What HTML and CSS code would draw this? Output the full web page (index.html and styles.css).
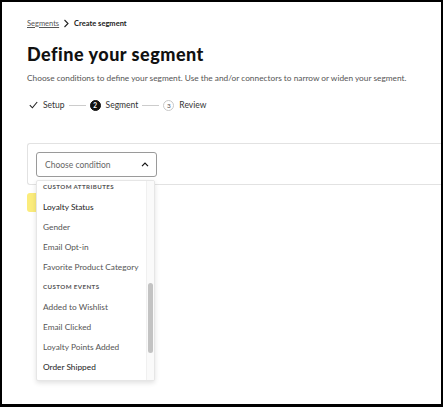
FILE: index.html
```html
<!DOCTYPE html>
<html lang="en">
<head>
  <meta charset="UTF-8" />
  <title>Create segment</title>
  <link rel="stylesheet" href="styles.css">
</head>
<body>
  <div class="page">
    <div class="breadcrumb">
      <a href="#">Segments</a>
      <svg class="crumb-sep" width="7" height="9" viewBox="0 0 7 9"><path d="M1.5 1l3.5 3.5L1.5 8" fill="none" stroke="#222" stroke-width="1.1"/></svg>
      <span class="current">Create segment</span>
    </div>

    <h1>Define your segment</h1>
    <p class="subtitle">Choose conditions to define your segment. Use the and/or connectors to narrow or widen your segment.</p>

    <div class="steps">
      <div class="step done">
        <svg width="9" height="8" viewBox="0 0 9 8"><path d="M0.8 4.2l2.6 2.6L8.2 1" fill="none" stroke="#222" stroke-width="1.1"/></svg>
        <span>Setup</span>
      </div>
      <div class="step-line"></div>
      <div class="step active">
        <span class="num">2</span>
        <span>Segment</span>
      </div>
      <div class="step-line"></div>
      <div class="step">
        <span class="num">3</span>
        <span>Review</span>
      </div>
    </div>

    <div class="card">
      <div class="select">
        <span>Choose condition</span>
        <svg width="8" height="5" viewBox="0 0 8 5"><path d="M1 4.2L4 1.2l3 3" fill="none" stroke="#111" stroke-width="1.2"/></svg>
      </div>
    </div>

    <div class="add-btn"></div>

    <div class="dropdown">
      <div class="list">
        <div class="group">Custom attributes</div>
        <div class="option dark">Loyalty Status</div>
        <div class="option">Gender</div>
        <div class="option">Email Opt-in</div>
        <div class="option">Favorite Product Category</div>
        <div class="group">Custom events</div>
        <div class="option">Added to Wishlist</div>
        <div class="option">Email Clicked</div>
        <div class="option">Loyalty Points Added</div>
        <div class="option dark">Order Shipped</div>
      </div>
      <div class="scroll-track"><div class="scroll-thumb"></div></div>
    </div>
  </div>
</body>
</html>
```

FILE: styles.css
```css
* {
  margin: 0;
  padding: 0;
  box-sizing: border-box;
}

html {
  background: #000;
}

body {
  margin: 2px 2px 0 2px;
  font-family: Lato, 'Open Sans', sans-serif;
  color: #333;
}

.page {
  position: relative;
  background: #fff;
  height: 402px;
  padding: 16px 0 0 25px;
  overflow: hidden;
}

.breadcrumb {
  display: flex;
  align-items: center;
  gap: 4px;
  font-size: 7.5px;
  height: 10px;
}

.breadcrumb a {
  color: #555;
  text-decoration: underline;
}

.breadcrumb .current {
  color: #222;
  font-weight: 700;
}

h1 {
  margin-top: 15px;
  font-size: 18px;
  font-weight: 900;
  color: #111;
  letter-spacing: 0.5px;
  line-height: 22px;
}

.subtitle {
  margin-top: 7px;
  font-size: 8.3px;
  color: #555;
  line-height: 12px;
}

.steps {
  display: flex;
  align-items: center;
  margin-top: 15px;
  padding-left: 2px;
  height: 12px;
  font-size: 8.5px;
  color: #333;
}

.step {
  display: flex;
  align-items: center;
  gap: 5px;
}

.num {
  width: 11px;
  height: 11px;
  border-radius: 50%;
  border: 1px solid #c8c8c8;
  font-size: 6.5px;
  display: flex;
  align-items: center;
  justify-content: center;
  color: #555;
}

.step.active .num {
  background: #111;
  border-color: #111;
  color: #fff;
  font-weight: 700;
}

.step-line {
  width: 17px;
  height: 1px;
  background: #ccc;
  margin: 0 4px;
}

.card {
  margin-top: 32px;
  margin-right: -4px;
  height: 42px;
  border: 1px solid #e2e2e2;
  border-right: none;
  border-radius: 3px 0 0 3px;
  padding: 8px 0 0 8px;
}

.select {
  width: 121px;
  height: 25px;
  border: 1px solid #9a9a9a;
  border-radius: 3px;
  display: flex;
  align-items: center;
  justify-content: space-between;
  padding: 0 7px 0 8px;
  font-size: 8.5px;
  color: #666;
}

.add-btn {
  margin-top: 8px;
  width: 40px;
  height: 19px;
  border-radius: 3px;
  background: #fbec7c;
}

.dropdown {
  position: absolute;
  left: 34px;
  top: 178px;
  width: 119px;
  height: 201px;
  background: #fff;
  border: 1px solid #e6e6e6;
  border-radius: 2px;
  box-shadow: 0 2px 5px rgba(0, 0, 0, 0.12);
  overflow: hidden;
}

.list {
  margin-top: -4px;
}

.group,
.option {
  height: 20px;
  line-height: 20px;
  padding-left: 6px;
}

.group {
  font-size: 6.2px;
  font-weight: 700;
  letter-spacing: 0.4px;
  text-transform: uppercase;
  color: #555;
}

.option {
  font-size: 8.3px;
  color: #555;
}

.option.dark {
  color: #222;
}

.scroll-track {
  position: absolute;
  right: 0;
  top: 0;
  bottom: 0;
  width: 8px;
  background: #fafafa;
  border-left: 1px solid #f0f0f0;
}

.scroll-thumb {
  margin: 102px 0 0 1px;
  width: 5px;
  height: 70px;
  border-radius: 3px;
  background: #c3c3c3;
}
```
